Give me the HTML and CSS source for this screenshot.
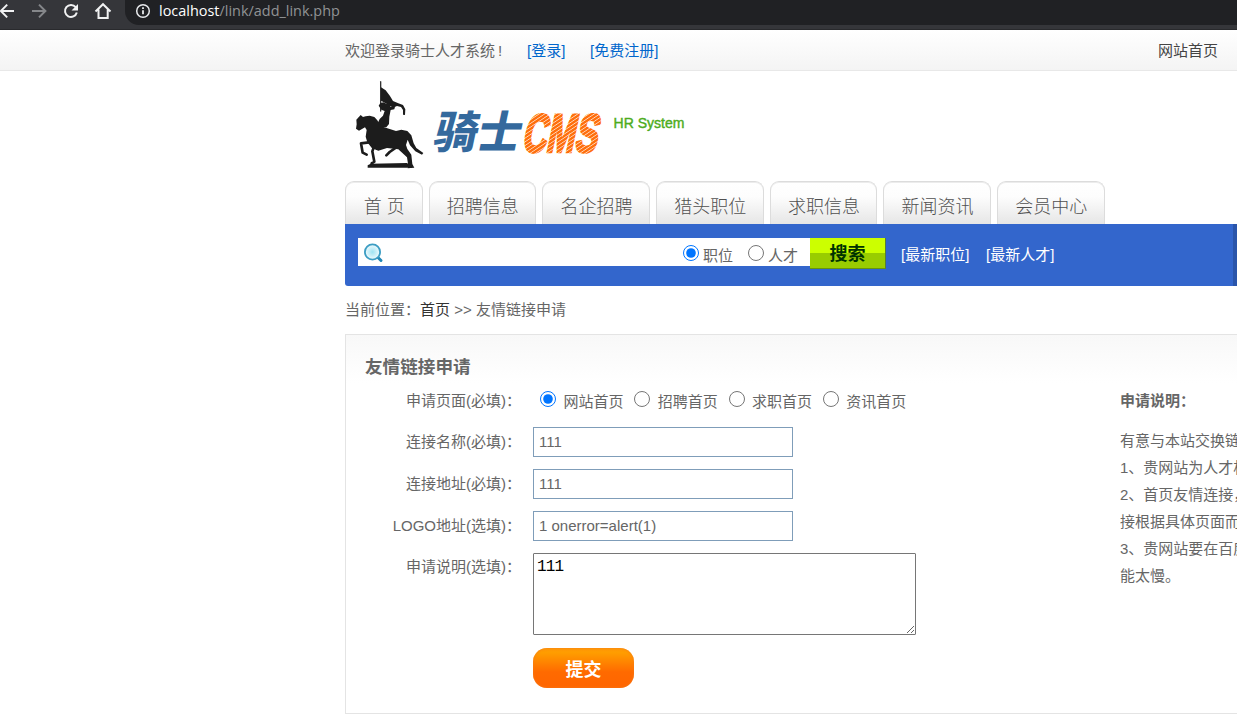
FILE: index.html
```html
<!DOCTYPE html>
<html lang="zh-CN">
<head>
<meta charset="utf-8">
<title>友情链接申请</title>
<link rel="stylesheet" href="styles.css">
</head>
<body>
<header class="browser">
  <svg class="nav-icons" width="112" height="25" viewBox="0 0 112 25" fill="none" stroke-width="2">
    <path d="M14 11H1M7.200 4.600L.8 11l6.400 6.400" stroke="#f1f2f3"/>
    <path d="M32 11h13M39 4.600l6.400 6.400-6.400 6.400" stroke="#85878a"/>
    <path d="M75.700 7.200A6 6 0 1 0 76.800 12.500" stroke="#f1f2f3"/>
    <path d="M78 4v6.500h-6.500z" fill="#f1f2f3"/>
    <path d="M95.500 11.500L103 4.200l7.500 7.300M98.500 9.500v8.500h9.200V9.500" stroke="#f1f2f3"/>
  </svg>
  <div class="address">
    <svg class="info" width="16" height="16" viewBox="0 0 16 16" fill="none" stroke="#e8eaed">
      <circle cx="8" cy="8" r="6.300" stroke-width="1.500"/>
      <path d="M8 7.200v4M8 4.300v1.700" stroke-width="1.800"/>
    </svg>
    <span class="host">localhost</span><span class="path">/link/add_link.php</span>
  </div>
</header>

<div class="topbar">
  <span class="welcome">欢迎登录骑士人才系统<span class="bang">!</span></span>
  <a class="login">[登录]</a>
  <a class="register">[免费注册]</a>
  <a class="site-home">网站首页</a>
</div>

<main class="page">
  <svg class="logo" width="360" height="110" viewBox="345 71 360 110">
    <defs>
      <pattern id="stripes" width="3.400" height="3.400" patternUnits="userSpaceOnUse" patternTransform="rotate(-38)">
        <rect width="3.400" height="3.400" fill="#ff6e0c"/>
        <rect width="3.400" height="0.800" fill="#ffe0c8"/>
      </pattern>
    </defs>
    <g transform="translate(345 75) scale(.3333)" fill="#1c1c1c" stroke-linejoin="round" stroke-linecap="round">
      <path d="M107 20v88" fill="none" stroke="#333" stroke-width="4"/>
      <path d="M108 37l14 9 13 17 9 15 16 7 14 5 7 13-1 17-6-1 0-14-6-9-12-3-12 5-14-9-22-12z"/>
      <path d="M106 84l10-2 8 4 8-4 6 6-2 8 14-1-2 8-11 2-4 20-1 22-8 10-18 0-11-6 9-19 10-10 5-14-10-4-8-12z"/>
      <path d="M47 120l7 6 8-2 12-2 14 4 9 10 6 11 10 8 40 13 16-4 18 4 12 13 7 24 8 14 21 15-4 5-20-10-16-18-7-17-5 16 4 12 12 17 3 28 6 11-20 2 2-7-4-26-26-24-34-4-26 8-19-7-14-18-5-17 3-20-5-8-18 10-9-6 2-13 -1-14z"/>
      <path d="M72 202l-24 3 5 28 12 6M88 212l-6 17 6 31-8 5M158 214l-24 17-10 10" fill="none" stroke="#1c1c1c" stroke-width="8"/>
      <path d="M77 266l108-2 15 7v7H68v-7z"/>
    </g>
    <text class="brand-cn" transform="translate(432 148) skewX(-12)" textLength="87" lengthAdjust="spacingAndGlyphs">骑士</text>
    <text class="brand-cms" transform="translate(521 151.500) skewX(-12)" fill="url(#stripes)" stroke="url(#stripes)" stroke-width="2.500" textLength="75" lengthAdjust="spacingAndGlyphs">CMS</text>
    <text class="brand-sub" x="613.500" y="128" textLength="71">HR System</text>
  </svg>

  <nav class="tabs">
    <a class="tab tab-home">首 页</a>
    <a class="tab">招聘信息</a>
    <a class="tab">名企招聘</a>
    <a class="tab">猎头职位</a>
    <a class="tab">求职信息</a>
    <a class="tab">新闻资讯</a>
    <a class="tab">会员中心</a>
  </nav>

  <section class="search">
    <div class="search-field">
      <svg width="22" height="22" viewBox="0 0 22 22">
        <defs><radialGradient id="lens"><stop offset="0" stop-color="#9fe3f2"/><stop offset="1" stop-color="#f2fbfd"/></radialGradient></defs>
        <path d="M14.500 15l3.500 3.500" stroke="#2388b5" stroke-width="3" stroke-linecap="round"/>
        <circle cx="9.500" cy="10" r="7.600" fill="url(#lens)" stroke="#3c9dc3" stroke-width="1.800"/>
      </svg>
      <label class="kind"><input type="radio" name="kind" checked>职位</label>
      <label class="kind"><input type="radio" name="kind">人才</label>
    </div>
    <button class="search-button">搜索</button>
    <a class="latest">[最新职位]</a>
    <a class="latest">[最新人才]</a>
  </section>

  <div class="crumbs">当前位置：<a>首页</a> &gt;&gt; 友情链接申请</div>

  <section class="panel">
    <h1 class="title">友情链接申请</h1>
    <div class="columns">
      <form class="form">
        <div class="row row-pages">
          <span class="label">申请页面(必填)：</span>
          <div class="choices">
            <label class="choice"><input type="radio" name="page" checked>网站首页</label>
            <label class="choice"><input type="radio" name="page">招聘首页</label>
            <label class="choice"><input type="radio" name="page">求职首页</label>
            <label class="choice"><input type="radio" name="page">资讯首页</label>
          </div>
        </div>
        <div class="row"><span class="label">连接名称(必填)：</span><input class="text" type="text" value="111"></div>
        <div class="row"><span class="label">连接地址(必填)：</span><input class="text" type="text" value="111"></div>
        <div class="row"><span class="label">LOGO地址(选填)：</span><input class="text" type="text" value="1 onerror=alert(1)"></div>
        <div class="row row-note"><span class="label">申请说明(选填)：</span><textarea class="note">111</textarea></div>
        <button class="submit" type="button">提交</button>
      </form>
      <aside class="help">
        <h2 class="help-title">申请说明：</h2>
        <p>有意与本站交换链</p>
        <p>1、贵网站为人才相</p>
        <p>2、首页友情连接，</p>
        <p>接根据具体页面而</p>
        <p>3、贵网站要在百度</p>
        <p>能太慢。</p>
      </aside>
    </div>
  </section>
</main>
</body>
</html>
```
FILE: styles.css
```css
* { box-sizing: border-box; }
html { overflow: hidden; }
body {
  margin: 0;
  width: 1237px;
  height: 714px;
  overflow: hidden;
  background: #fff;
  color: #666;
  font: 15px/20px "Liberation Sans", "Noto Sans CJK SC", sans-serif;
  white-space: nowrap;
}
.browser {
  display: flex;
  height: 30px;
  background: #35363a;
  border-bottom: 1px solid #292a2d;
}
.nav-icons { flex: none; margin-right: 13px; }
.address {
  display: flex;
  flex: 1;
  height: 25px;
  padding: 0 0 3px 10px;
  align-items: center;
  background: #202124;
  border-bottom-left-radius: 14px;
  font: 14.450px/20px "Open Sans", sans-serif;
  color: #919395;
}
.info { margin-right: 8px; }
.host { color: #fff; }

.topbar {
  display: flex;
  height: 41px;
  padding-left: 345px;
  line-height: 42px;
  background: linear-gradient(#fff, #f4f4f4);
  border-bottom: 1px solid #e8e8e8;
}
.welcome { width: 182px; }
.bang { margin-left: 3px; }
.login { width: 63px; }
.login, .register { color: #0066cc; }
.site-home { margin-left: auto; padding-right: 19px; color: #444; }

.page { width: 892px; margin-left: 345px; }
.logo { display: block; }
.brand-cn { font: 900 44px "Noto Sans CJK SC", sans-serif; fill: #34699d; }
.brand-cms { font: bold 54px "Liberation Sans", sans-serif; }
.brand-sub { font: 14px "Liberation Sans", sans-serif; fill: #4dac20; stroke: #4dac20; stroke-width: .4px; }

.tabs { display: flex; gap: 6px; height: 43px; }
.tab {
  width: 107.700px;
  padding-left: 1px;
  border: 1px solid #dcdcdc;
  border-bottom: 0;
  border-radius: 9px 9px 0 0;
  background: linear-gradient(#fff, #fdfdfd 35%, #e6e6e6);
  box-shadow: inset 0 1px 0 #ececec;
  color: #505050;
  font-size: 18px;
  font-weight: 300;
  line-height: 50px;
  text-align: center;
}
.tab-home { width: 77.500px; }

.search {
  display: flex;
  width: 892px;
  height: 62px;
  padding: 14px 0 0 13px;
  background: linear-gradient(90deg, #36c 888px, #2a55aa 888px);
  border-bottom-left-radius: 3px;
}
.search-field {
  display: flex;
  width: 452px;
  height: 28px;
  padding: 4px 0 0 5px;
  background: #fff;
}
.search-field svg { flex: none; margin-right: 298px; }
.kind { display: flex; flex: none; width: 65px; line-height: 27px; }
.kind input { flex: none; width: 16px; height: 16px; margin: 3px 4px 0 0; }
.search-button {
  width: 76px;
  height: 31px;
  margin-right: 15px;
  padding: 0 0 1px;
  border: 0;
  border-right: 1px solid #557d35;
  border-bottom: 1px solid #68940c;
  background: linear-gradient(#cf0 15px, #9c0 15px);
  color: #030;
  font: bold 18px/29px "Noto Sans CJK SC", sans-serif;
}
.latest { width: 85px; color: #fff; line-height: 34px; }

.crumbs { height: 48px; line-height: 48px; }
.crumbs a { color: #333; }

.panel {
  height: 380px;
  padding-left: 19px;
  border: 1px solid #e4e4e4;
  border-right: 0;
  background: linear-gradient(#f8f8f8, #fff 48px);
}
.title { height: 52px; margin: 0; padding-top: 19px; font-size: 17.600px; line-height: 26px; }
.columns { display: flex; }
.form { flex: none; width: 755px; }
.row { display: flex; height: 42px; padding-top: 1px; }
.label { width: 156px; margin-right: 12px; text-align: right; line-height: 30px; }
.row-pages { height: 39px; }
.row-pages .label { line-height: 26px; }
.choices { display: flex; padding-left: 7px; }
.choice { display: flex; width: 94.300px; line-height: 27px; }
.choice input { width: 16px; height: 16px; margin: 3px 7.400px 0 0; }
.text {
  width: 260px;
  height: 30px;
  padding: 0 5px 2px;
  border: 1px solid #7f9db9;
  color: #666;
  font: 15px "Liberation Sans", sans-serif;
}
.row-note { height: 96px; }
.row-note .label { line-height: 28px; }
.note {
  width: 383px;
  height: 82px;
  padding: 3px;
  border: 1px solid #767676;
  border-radius: 1px;
  font: 16px/20px "Liberation Mono", monospace;
  letter-spacing: -.8px;
  color: #000;
}
.submit {
  display: block;
  width: 101px;
  height: 40px;
  margin: 0 0 0 168px;
  padding: 0;
  border: 0;
  border-radius: 14px;
  background: linear-gradient(#ff9a08, #ff9d00 12%, #ff6a00 60%, #ff6500);
  box-shadow: inset 0 0 3px #f57a16;
  color: #fff;
  font: bold 18px/40px "Noto Sans CJK SC", sans-serif;
}
.help { width: 117px; overflow: hidden; }
.help-title { margin: 0 0 13px; font-size: 15px; line-height: 27px; }
.help p { margin: 0; line-height: 27px; }
```
